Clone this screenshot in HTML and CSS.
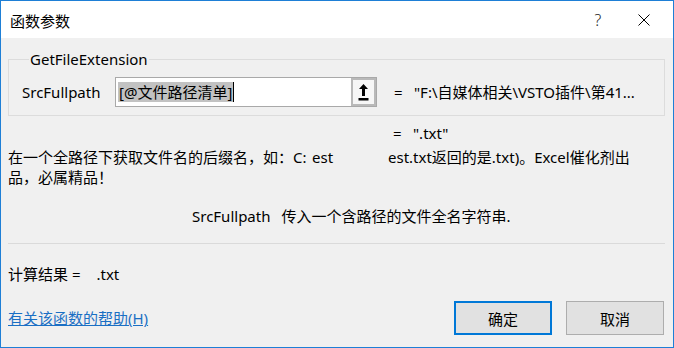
FILE: index.html
```html
<!DOCTYPE html>
<html lang="zh-CN">
  <head>
    <meta charset="UTF-8" />
    <meta name="viewport" content="width=device-width, initial-scale=1.0" />
    <title>函数参数</title>
    <link rel="stylesheet" href="styles.css">
  </head>
  <body>
    <div class="window">
      <div class="titlebar">
        <span class="title">函数参数</span>
        <div class="title_buttons">
          <span class="title_btn help">?</span>
          <span class="title_btn close">
            <svg width="12" height="12" viewBox="0 0 12 12">
              <path d="M0.5 0.5 L11.5 11.5 M11.5 0.5 L0.5 11.5" stroke="#000" stroke-width="1" fill="none" />
            </svg>
          </span>
        </div>
      </div>
      <div class="content">
        <fieldset class="group">
          <legend>GetFileExtension</legend>
          <div class="arg_row">
            <label class="arg_label" for="srcfullpath">SrcFullpath</label>
            <div class="arg_input">
              <span class="arg_text"><span class="selected">[@文件路径清单]</span><span class="caret"></span></span>
              <span class="ref_btn">
                <svg width="11" height="17" viewBox="0 0 11 17">
                  <polygon points="5.5,0 10,5 7,5 7,12 4,12 4,5 1,5" fill="#000" />
                  <rect x="0.5" y="14" width="10" height="2.5" fill="#000" />
                </svg>
              </span>
            </div>
            <span class="eq">=</span>
            <span class="arg_value">"F:\自媒体相关\VSTO插件\第41...</span>
          </div>
        </fieldset>
        <div class="result_row">
          <span class="eq">=</span>
          <span class="arg_value">".txt"</span>
        </div>
        <p class="desc">在一个全路径下获取文件名的后缀名，如：C:&#9;est&#9;est.txt返回的是.txt)。Excel催化剂出<br>品，必属精品！</p>
        <p class="arg_desc"><span class="arg_name">SrcFullpath</span>传入一个含路径的文件全名字符串.</p>
        <div class="separator"></div>
        <p class="calc">计算结果 =<span class="calc_value">.txt</span></p>
        <div class="footer">
          <a href="#" class="help_link">有关该函数的帮助(H)</a>
          <div class="buttons">
            <button type="button" class="btn primary">确定</button>
            <button type="button" class="btn">取消</button>
          </div>
        </div>
      </div>
    </div>
  </body>
</html>
```

FILE: styles.css
```css
* {
  box-sizing: border-box;
}
body {
  margin: 0;
  font-family: "Noto Sans", "Noto Sans CJK SC", sans-serif;
  font-size: 15px;
  color: #000;
}
.window {
  width: 674px;
  height: 348px;
  border: 1px solid #1e7fd6;
  background-color: #f0f0f0;
  overflow: hidden;
}
.titlebar {
  height: 37px;
  background-color: #fff;
  display: flex;
  align-items: center;
  justify-content: space-between;
  padding-left: 9px;
}
.title {
  line-height: 20px;
  margin-top: 2px;
}
.title_buttons {
  display: flex;
  padding-right: 6px;
}
.title_btn {
  width: 46px;
  height: 37px;
  display: flex;
  align-items: center;
  justify-content: center;
}
.help {
  font-family: "Noto Sans", sans-serif;
  font-weight: 300;
  font-size: 16px;
  color: #222;
}
.content {
  padding: 0 8px 0 7px;
}
.group {
  margin: 11px 0 0 0;
  padding: 8px 13px 8px 13px;
  border: 1px solid #dcdcdc;
  min-width: 0;
}
.group legend {
  padding: 0 1px;
  margin-left: 7px;
  line-height: 20px;
}
.arg_row {
  display: flex;
  align-items: center;
}
.arg_label {
  width: 93px;
  line-height: 20px;
}
.arg_input {
  width: 262px;
  height: 30px;
  background-color: #fff;
  border: 1px solid #a9a9a9;
  display: flex;
  align-items: center;
  justify-content: space-between;
  padding-left: 2px;
}
.arg_text {
  display: flex;
  align-items: center;
  line-height: 20px;
}
.selected {
  background-color: #c2c2c2;
  padding: 0 1px;
}
.caret {
  width: 1px;
  height: 20px;
  background-color: #000;
}
.ref_btn {
  width: 25px;
  height: 28px;
  border: 2px solid #b9b9b9;
  background-color: #f6f6f6;
  display: flex;
  align-items: center;
  justify-content: center;
  padding-top: 1px;
}
.eq {
  margin-left: 17px;
  width: 20px;
  line-height: 20px;
}
.arg_value {
  line-height: 20px;
  white-space: nowrap;
}
.result_row {
  display: flex;
  margin-top: 7px;
  padding-left: 368px;
}
.desc {
  margin: 4px 0 0 0;
  line-height: 20px;
  white-space: pre-wrap;
  tab-size: 76px;
}
.arg_desc {
  margin: 19px 0 0 0;
  padding-left: 184px;
  line-height: 20px;
}
.arg_name {
  margin-right: 11px;
}
.separator {
  margin-top: 17px;
  height: 1px;
  background-color: #dadada;
}
.calc {
  margin: 20px 0 0 0;
  line-height: 20px;
}
.calc_value {
  margin-left: 16px;
}
.footer {
  margin-top: 17px;
  display: flex;
  align-items: center;
  justify-content: space-between;
  padding-right: 1px;
}
.help_link {
  color: #1a6fc4;
  text-decoration: underline;
  line-height: 20px;
}
.buttons {
  display: flex;
  gap: 14px;
}
.btn {
  width: 98px;
  height: 34px;
  font-family: inherit;
  font-size: 15px;
  color: #000;
  background-color: #e1e1e1;
  border: 1px solid #adadad;
  padding: 0;
}
.btn.primary {
  border: 2px solid #0078d7;
}
```
